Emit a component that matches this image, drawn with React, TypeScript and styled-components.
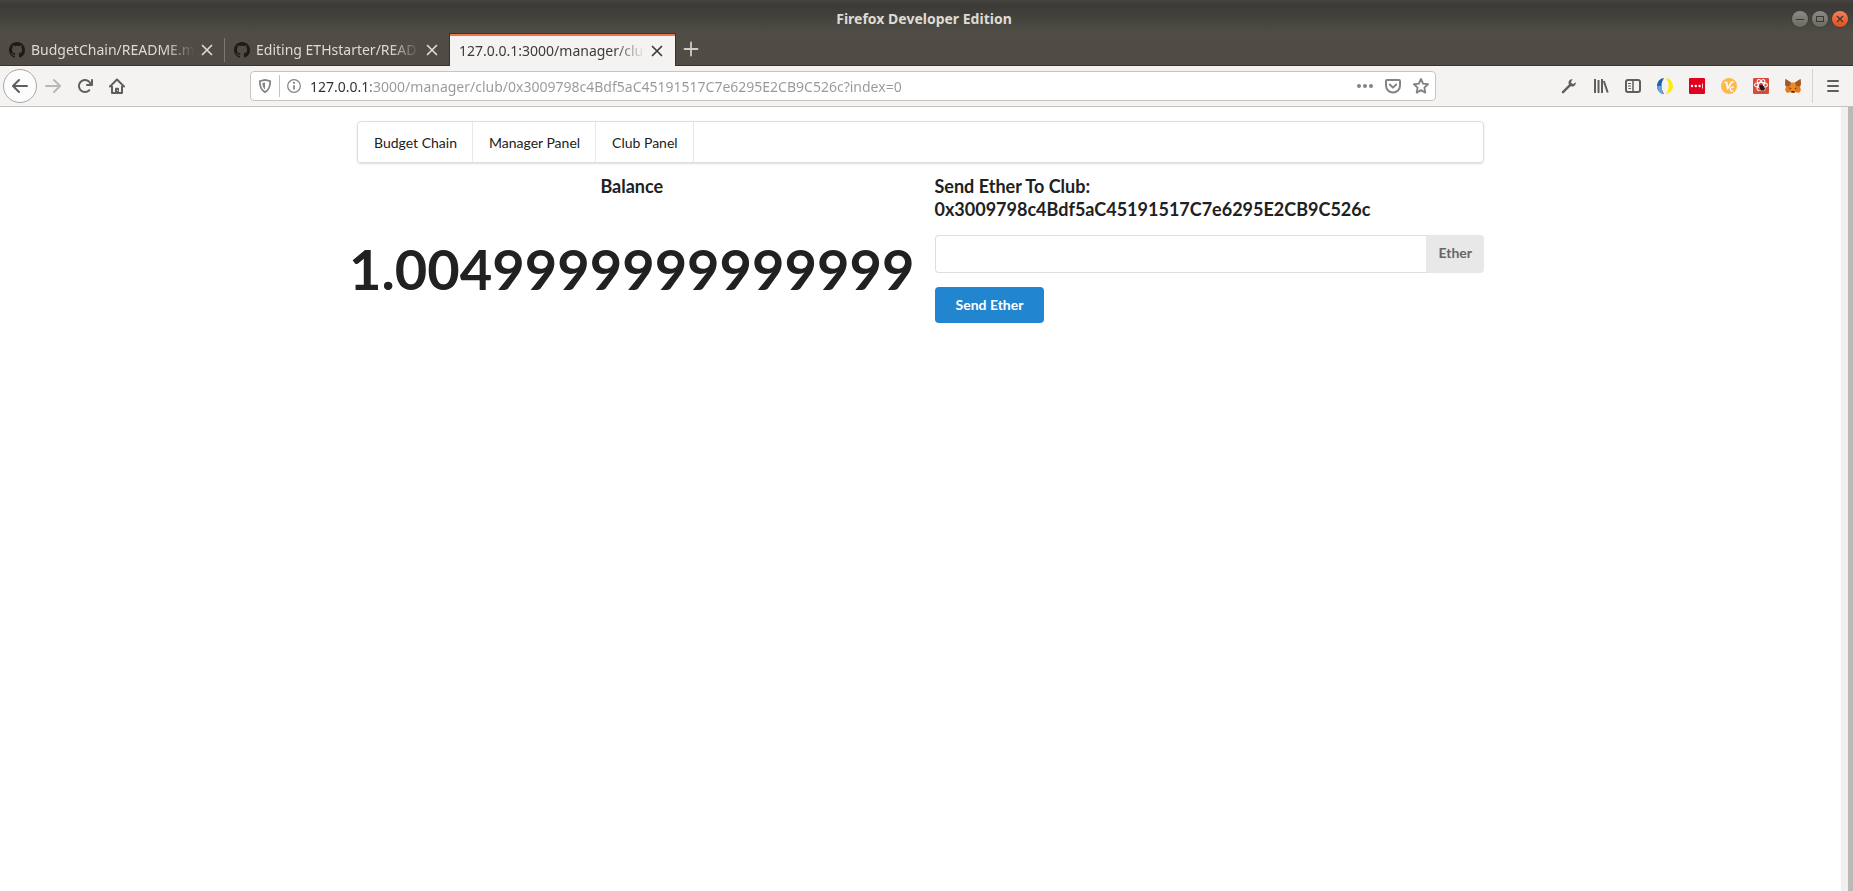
import React from "react";
import styled, { createGlobalStyle, css } from "styled-components";

const GlobalStyle = createGlobalStyle`
  *, *::before, *::after { box-sizing: border-box; }
  body {
    margin: 0;
    background: #ffffff;
    color: #212121;
    font-family: Lato, "Liberation Sans", sans-serif;
    font-size: 14px;
    line-height: 18px;
  }
  button, input { font: inherit; }
`;

const uiFont = css`
  font-family: "Noto Sans", "Open Sans", sans-serif;
  font-size: 14px;
  line-height: 20px;
`;

const Window = styled.div`
  display: flex;
  flex-direction: column;
  min-height: 100vh;
`;

const Chrome = styled.header`
  ${uiFont}
  background: linear-gradient(#44433e 0, #3c3b37 5px, #3f3e3a 12px, #504d46 33px, #504c45 66px);
`;

const TitleBar = styled.div`
  display: grid;
  grid-template-columns: 1fr auto 1fr;
  align-items: center;
  height: 33px;
  padding: 5px 5px 0 0;
`;

const WindowTitle = styled.span`
  grid-column: 2;
  color: #dfdbd2;
  font-weight: 700;
  line-height: 28px;
`;

const WindowControls = styled.div`
  display: flex;
  justify-content: flex-end;
  gap: 4px;
`;

const ControlButton = styled.button<{ $close?: boolean }>`
  display: flex;
  width: 16px;
  height: 16px;
  padding: 0;
  border: 0;
  border-radius: 50%;
  color: #3a3935;
  background: ${(p) =>
    p.$close ? "linear-gradient(#f58059, #e0501c)" : "linear-gradient(#8d8b85, #6b6964)"};
  box-shadow: 0 0 0 1px #38373380;
`;

const TabStrip = styled.div`
  display: flex;
  height: 33px;
`;

const Tab = styled.div<{ $active?: boolean }>`
  position: relative;
  display: flex;
  align-items: center;
  gap: 6px;
  flex: 0 1 225px;
  min-width: 0;
  padding: 2px 12px 0 9px;
  color: ${(p) => (p.$active ? "#3c3c3c" : "#dfdbd2")};
  border-bottom: 1px solid ${(p) => (p.$active ? "#f4f3f1" : "#35342f")};
  ${(p) =>
    p.$active &&
    css`
      background: #f4f3f1;
      border-top: 1px solid #35342f;
      box-shadow: inset 0 2px #ed764d, -1px 0 #35342f, 1px 0 #35342f;
    `}
`;

const TabDivider = styled.span`
  align-self: center;
  width: 1px;
  height: 24px;
  margin-left: -1px;
  background: #7b7972;
`;

const TabLabel = styled.span`
  flex: 1;
  min-width: 0;
  overflow: hidden;
  white-space: nowrap;
  mask-image: linear-gradient(to left, transparent, #000 30px);
`;

const TabButton = styled.button`
  display: flex;
  padding: 0;
  border: 0;
  background: none;
  color: inherit;
`;

const TabTail = styled.div`
  display: flex;
  align-items: center;
  flex: 1;
  padding-left: 8px;
  color: #d0cdc5;
  border-bottom: 1px solid #35342f;
`;

const NavBar = styled.nav`
  display: flex;
  align-items: center;
  height: 41px;
  padding-left: 3px;
  color: #5e5e5c;
  background: #f4f3f1;
  border-bottom: 1px solid #c5c3c0;
`;

const IconButton = styled.button<{ $faded?: boolean }>`
  display: flex;
  align-items: center;
  justify-content: center;
  width: 32px;
  height: 32px;
  padding: 0;
  border: 0;
  background: none;
  color: ${(p) => (p.$faded ? "#b9b8b6" : "inherit")};
`;

const BackButton = styled(IconButton)`
  width: 34px;
  height: 34px;
  border: 1px solid #a9a8a6;
  border-radius: 50%;
  background: #fcfcfc;
`;

const Spring = styled.div`
  flex: 0 1 117px;
`;

const UrlBar = styled.div`
  display: flex;
  align-items: center;
  flex: 1;
  min-width: 0;
  height: 30px;
  padding: 0 0 0 7px;
  color: #858483;
  background: #ffffff;
  border: 1px solid #c8c5c1;
  border-radius: 4px;
`;

const UrlButton = styled(IconButton)`
  width: 28px;
  height: 28px;
  &:first-child { width: 14px; margin-right: 7px; }
`;

const UrlDivider = styled.span`
  width: 1px;
  height: 22px;
  background: #c4c3c1;
`;

const UrlInput = styled.input`
  flex: 1;
  min-width: 0;
  height: 24px;
  padding: 0 0 0 2px;
  border: 0;
  outline: 0;
  color: #999897;
  -webkit-text-fill-color: transparent;
  background: linear-gradient(to right, #2e2e2e 63px, #999897 63px);
  background-clip: text;
`;

const NavDivider = styled.span`
  width: 1px;
  height: 34px;
  margin-left: 3px;
  background: #d5d3d0;
`;

const MenuButton = styled(IconButton)`
  width: 40px;
`;

const Viewport = styled.div`
  display: flex;
  flex: 1;
`;

const Page = styled.main`
  flex: 1;
  min-width: 0;
  padding: 14px 14px 28px;
`;

const ScrollTrack = styled.div`
  display: flex;
  justify-content: flex-end;
  width: 12px;
  background: #f1f0ef;
`;

const ScrollThumb = styled.div`
  width: 5px;
  background: #bab9b8;
`;

const Container = styled.div`
  max-width: 1127px;
  margin: 0 auto;
`;

const SiteMenu = styled.nav`
  display: flex;
  min-height: 42px;
  border: 1px solid #dededf;
  border-radius: 4px;
  box-shadow: 0 1px 2px rgba(34, 36, 38, 0.15);
`;

const SiteLink = styled.a`
  padding: 12px 15px 10px 16px;
  color: #212121;
  text-decoration: none;
  border-right: 1px solid #e8e8e9;
`;

const Columns = styled.div`
  display: grid;
  grid-template-columns: repeat(2, minmax(0, 1fr));
  gap: 28px;
  padding-top: 12px;
`;

const BalancePanel = styled.section`
  display: flex;
  flex-direction: column;
  align-items: center;
`;

const Heading = styled.h3`
  margin: 0 0 14px;
  font-size: 18px;
  line-height: 23px;
  font-weight: 700;
`;

const BalanceValue = styled.div`
  margin-top: 28px;
  font-size: 56px;
  line-height: 58px;
  font-weight: 700;
`;

const AmountField = styled.div`
  display: flex;
  height: 38px;
  margin-bottom: 14px;
`;

const AmountInput = styled.input`
  flex: 1;
  min-width: 0;
  padding: 0 14px;
  border: 1px solid #dededf;
  border-right: 0;
  border-radius: 4px 0 0 4px;
  outline: 0;
  color: #212121;
`;

const AmountLabel = styled.label`
  padding: 9px 12px;
  color: #666666;
  background: #e8e8e8;
  border-radius: 0 4px 4px 0;
  font-weight: 700;
`;

const SubmitButton = styled.button`
  height: 36px;
  padding: 0 21px;
  border: 0;
  border-radius: 4px;
  background: #2185d0;
  color: #ffffff;
  font-weight: 700;
`;

type IconProps = { size?: number; viewBox?: string; children: React.ReactNode };

const Icon = ({ size = 16, viewBox = "0 0 16 16", children }: IconProps) => (
  <svg width={size} height={size} viewBox={viewBox} fill="none" stroke="currentColor" strokeWidth="2" aria-hidden="true">
    {children}
  </svg>
);

const arrowPath =
  "M15 7H3.414l4.293-4.293a1 1 0 0 0-1.414-1.414l-6 6a1 1 0 0 0 0 1.414l6 6a1 1 0 0 0 1.414-1.414L3.414 9H15a1 1 0 0 0 0-2z";

const BackIcon = () => (
  <Icon><path d={arrowPath} fill="currentColor" stroke="none" /></Icon>
);

const ForwardIcon = () => (
  <Icon><path d={arrowPath} transform="translate(16 0) scale(-1 1)" fill="currentColor" stroke="none" /></Icon>
);

const ReloadIcon = () => (
  <Icon>
    <path fill="currentColor" stroke="none" d="M15 1a1 1 0 0 0-1 1v2.418A6.995 6.995 0 1 0 8 15a6.954 6.954 0 0 0 4.95-2.05 1 1 0 0 0-1.414-1.414A5.019 5.019 0 1 1 12.549 6H10a1 1 0 0 0 0 2h5a1 1 0 0 0 1-1V2a1 1 0 0 0-1-1z" />
  </Icon>
);

const HomeIcon = () => (
  <Icon>
    <path d="M1 8.5 8 1.5l7 7" strokeLinecap="round" strokeLinejoin="round" />
    <path d="M3 8v7h10V8" strokeLinejoin="round" />
    <path d="M6 15v-4.5A.8.8 0 0 1 6.800 9.700h2.400a.8.8 0 0 1 .8.8V15z" fill="currentColor" stroke="none" />
    <path d="M8.500 12v1" stroke="#f4f3f1" strokeWidth="1" />
  </Icon>
);

const GitHubIcon = () => (
  <Icon>
    <path fill="#1b1b1a" stroke="none" d="M8 0C3.58 0 0 3.58 0 8c0 3.54 2.29 6.53 5.47 7.59.4.07.55-.17.55-.38 0-.19-.01-.82-.01-1.49-2.01.37-2.53-.49-2.69-.94-.09-.23-.48-.94-.82-1.13-.28-.15-.68-.52-.01-.53.63-.01 1.08.58 1.23.82.72 1.21 1.87.87 2.33.66.07-.52.28-.87.51-1.07-1.78-.2-3.64-.89-3.64-3.95 0-.87.31-1.59.82-2.15-.08-.2-.36-1.02.08-2.12 0 0 .67-.21 2.2.82.64-.18 1.32-.27 2-.27.68 0 1.36.09 2 .27 1.53-1.04 2.2-.82 2.2-.82.44 1.1.16 1.92.08 2.12.51.56.82 1.27.82 2.15 0 3.07-1.87 3.75-3.65 3.95.29.25.54.73.54 1.48 0 1.07-.01 1.93-.01 2.2 0 .21.15.46.55.38A8.013 8.013 0 0 0 16 8c0-4.42-3.58-8-8-8z" />
  </Icon>
);

const CloseIcon = () => (
  <Icon size={12} viewBox="2 2 12 12"><path d="M3.500 3.500l9 9M12.500 3.500l-9 9" strokeLinecap="round" strokeWidth="1.700" /></Icon>
);

const PlusIcon = () => (
  <Icon><path d="M8 1.500v13M1.500 8h13" strokeLinecap="round" strokeWidth="1.800" /></Icon>
);

const ShieldIcon = () => (
  <Icon size={14}>
    <path d="M8 1 14 2.500c0 6-1.500 10-6 12.500C3.500 12.500 2 8.500 2 2.500z" strokeLinejoin="round" />
    <path d="M8 4v8C5.800 10.500 5.200 8 5 4.700z" fill="currentColor" stroke="none" />
  </Icon>
);

const InfoIcon = () => (
  <Icon size={14}>
    <circle cx="8" cy="8" r="7.200" strokeWidth="1.400" />
    <path d="M8 7v5" />
    <circle cx="8" cy="4.400" r="1.300" fill="currentColor" stroke="none" />
  </Icon>
);

const DotsIcon = () => (
  <Icon>
    <g fill="currentColor" stroke="none">
      <circle cx="2" cy="8" r="2" />
      <circle cx="8" cy="8" r="2" />
      <circle cx="14" cy="8" r="2" />
    </g>
  </Icon>
);

const PocketIcon = () => (
  <Icon>
    <path d="M1 3a1 1 0 0 1 1-1h12a1 1 0 0 1 1 1v4.500a7 7 0 0 1-14 0z" />
    <path d="M4.800 6.500 8 9.600l3.200-3.100" strokeLinecap="round" strokeLinejoin="round" />
  </Icon>
);

const StarIcon = () => (
  <Icon>
    <path d="m8 1 2.100 4.600 4.900.6-3.600 3.400.9 5L8 12.200l-4.300 2.400.9-5L1 6.200l4.900-.6z" strokeLinejoin="round" strokeWidth="1.900" />
  </Icon>
);

const WrenchIcon = () => (
  <Icon>
    <path d="M2 14.200 8.800 7.400" strokeWidth="2.400" strokeLinecap="round" />
    <path d="M14.700 4.200 12 6.200 9.800 4.200 11.600 1.300C9.500.9 7.500 2.500 7.500 4.700c0 2.200 1.600 3.900 3.700 3.900 2.200 0 3.900-2.100 3.500-4.400z" fill="currentColor" stroke="none" />
  </Icon>
);

const LibraryIcon = () => (
  <Icon>
    <path d="M2 1v14M5.500 2v13M9 1v14" />
    <path d="m10.800 3 3.900 11.500" />
  </Icon>
);

const SidebarIcon = () => (
  <Icon>
    <rect x="1" y="2" width="14" height="12" rx="2" />
    <path d="M8 2v12" strokeWidth="1.500" />
    <path d="M3 5.500h3M3 8h3M3.500 10.500H6" strokeWidth="1" />
  </Icon>
);

const RingIcon = () => (
  <Icon>
    <path d="M7 0C3 .4 0 3.800 0 8s3 7.600 7 8C5.500 13.500 4.500 11 4.500 8S5.500 2.500 7 0z" fill="#1b62b5" stroke="none" />
    <path d="M0 8c0 4.200 3 7.600 7 8C5.500 13.500 4.500 11 4.500 8z" fill="#69a1d8" stroke="none" />
    <path d="M9 0c4 .4 7 3.800 7 8s-3 7.600-7 8c1.500-2.500 2.500-5 2.500-8S10.500 2.500 9 0z" fill="#fbea19" stroke="none" />
  </Icon>
);

const LastPassIcon = () => (
  <Icon>
    <rect width="16" height="16" rx="1" fill="#e2001f" stroke="none" />
    <g fill="#ffffff" stroke="none">
      <circle cx="3" cy="8" r="1.200" />
      <circle cx="6.800" cy="8" r="1.200" />
      <circle cx="10.600" cy="8" r="1.200" />
      <rect x="13" y="5.500" width=".800" height="5" />
    </g>
  </Icon>
);

const VimiumIcon = () => (
  <Icon>
    <circle cx="8" cy="8" r="8" fill="#fdb94c" stroke="none" />
    <path d="M3.500 4.500h2.200L6.500 11 10.700 4h2" stroke="#ffffff" strokeWidth="1.500" strokeLinejoin="round" />
    <path d="M13 9.300c-1.500-1-3.600.2-3.600 1.900s1.500 2.500 3 1.600" stroke="#ffffff" strokeWidth="1.300" />
  </Icon>
);

const ReactToolsIcon = () => (
  <Icon>
    <rect width="16" height="16" rx="1" fill="#d84a3a" stroke="none" />
    <g stroke="#ffffff" strokeWidth="1.100">
      <ellipse cx="8" cy="7" rx="6.500" ry="2.500" />
      <ellipse cx="8" cy="7" rx="6" ry="2.500" transform="rotate(60 8 7)" />
      <ellipse cx="8" cy="7" rx="6" ry="2.500" transform="rotate(120 8 7)" />
    </g>
    <ellipse cx="9" cy="9.800" rx="2.200" ry="3.200" fill="#2a1513" stroke="none" transform="rotate(-35 9 9.800)" />
    <path d="m6 8 6 2.500M6.500 12l5-4" stroke="#2a1513" strokeWidth=".800" />
  </Icon>
);

const FoxIcon = () => (
  <Icon>
    <g stroke="none">
      <path d="M.500 1 6 4.500h4L15.500 1 16 6l-1 3 .700 3-1.700 2.700-3-.7L9.500 15h-3L5 14l-3 .700L.300 12 1 9 0 6z" fill="#f08a24" />
      <path d="M.500 1 6 4.500 5 8 1 8.500 0 6zM15.500 1 10 4.500 11 8l4 .500 1-2.500z" fill="#9b5a2e" />
      <path d="m1 9 4-1 1.500 4L5 14l-3 .700L.300 12zM15 9l-4-1-1.500 4 1.500 2 3 .700 1.700-2.700z" fill="#e57a1f" />
      <path d="m4.500 9.500 2 1-1.500.5zM11.500 9.500l-2 1 1.500.5zM6.500 13h3v1.500h-3z" fill="#2b2a33" />
    </g>
  </Icon>
);

const HamburgerIcon = () => (
  <Icon><path d="M3 3h10M3 8h10M3 13h10" strokeLinecap="round" /></Icon>
);

const tabs = [
  { title: "BudgetChain/README.m", github: true },
  { title: "Editing ETHstarter/READ", github: true },
  { title: "127.0.0.1:3000/manager/clu", active: true },
];

const toolbarItems = [
  { name: "Developer tools", Glyph: WrenchIcon },
  { name: "Library", Glyph: LibraryIcon },
  { name: "Sidebars", Glyph: SidebarIcon },
  { name: "Container extension", Glyph: RingIcon },
  { name: "Password manager", Glyph: LastPassIcon },
  { name: "Vim keys", Glyph: VimiumIcon },
  { name: "React tools", Glyph: ReactToolsIcon },
  { name: "Wallet", Glyph: FoxIcon },
];

const siteLinks = ["Budget Chain", "Manager Panel", "Club Panel"];

export default function App() {
  return (
    <Window>
      <GlobalStyle />
      <Chrome>
        <TitleBar>
          <WindowTitle>Firefox Developer Edition</WindowTitle>
          <WindowControls>
            <ControlButton aria-label="Minimize">
              <Icon><path d="M4 8.500h8" strokeWidth="1" /></Icon>
            </ControlButton>
            <ControlButton aria-label="Maximize">
              <Icon><rect x="4.500" y="5.500" width="7" height="5" strokeWidth="1" /></Icon>
            </ControlButton>
            <ControlButton aria-label="Close" $close>
              <Icon><path d="m5 5 6 6M11 5l-6 6" strokeWidth="1.300" /></Icon>
            </ControlButton>
          </WindowControls>
        </TitleBar>
        <TabStrip>
          {tabs.map((tab, i) => (
            <React.Fragment key={tab.title}>
              {i === 1 && <TabDivider />}
              <Tab $active={tab.active}>
                {tab.github && <GitHubIcon />}
                <TabLabel>{tab.title}</TabLabel>
                <TabButton aria-label="Close tab"><CloseIcon /></TabButton>
              </Tab>
            </React.Fragment>
          ))}
          <TabTail>
            <TabButton aria-label="New tab"><PlusIcon /></TabButton>
          </TabTail>
        </TabStrip>
        <NavBar>
          <BackButton aria-label="Back"><BackIcon /></BackButton>
          <IconButton aria-label="Forward" $faded><ForwardIcon /></IconButton>
          <IconButton aria-label="Reload"><ReloadIcon /></IconButton>
          <IconButton aria-label="Home"><HomeIcon /></IconButton>
          <Spring />
          <UrlBar>
            <UrlButton aria-label="Tracking protection"><ShieldIcon /></UrlButton>
            <UrlDivider />
            <UrlButton aria-label="Site information"><InfoIcon /></UrlButton>
            <UrlInput
              aria-label="Address"
              defaultValue="127.0.0.1:3000/manager/club/0x3009798c4Bdf5aC45191517C7e6295E2CB9C526c?index=0"
            />
            <UrlButton aria-label="Page actions"><DotsIcon /></UrlButton>
            <UrlButton aria-label="Save to Pocket"><PocketIcon /></UrlButton>
            <UrlButton aria-label="Bookmark"><StarIcon /></UrlButton>
          </UrlBar>
          <Spring />
          {toolbarItems.map(({ name, Glyph }) => (
            <IconButton key={name} aria-label={name}><Glyph /></IconButton>
          ))}
          <NavDivider />
          <MenuButton aria-label="Open menu"><HamburgerIcon /></MenuButton>
        </NavBar>
      </Chrome>
      <Viewport>
        <Page>
          <Container>
            <SiteMenu>
              {siteLinks.map((label) => (
                <SiteLink key={label} href="#">{label}</SiteLink>
              ))}
            </SiteMenu>
            <Columns>
              <BalancePanel>
                <Heading>Balance</Heading>
                <BalanceValue>1.0049999999999999</BalanceValue>
              </BalancePanel>
              <form onSubmit={(e) => e.preventDefault()}>
                <Heading>
                  Send Ether To Club:
                  <br />
                  0x3009798c4Bdf5aC45191517C7e6295E2CB9C526c
                </Heading>
                <AmountField>
                  <AmountInput id="amount" type="text" />
                  <AmountLabel htmlFor="amount">Ether</AmountLabel>
                </AmountField>
                <SubmitButton type="submit">Send Ether</SubmitButton>
              </form>
            </Columns>
          </Container>
        </Page>
        <ScrollTrack>
          <ScrollThumb />
        </ScrollTrack>
      </Viewport>
    </Window>
  );
}
